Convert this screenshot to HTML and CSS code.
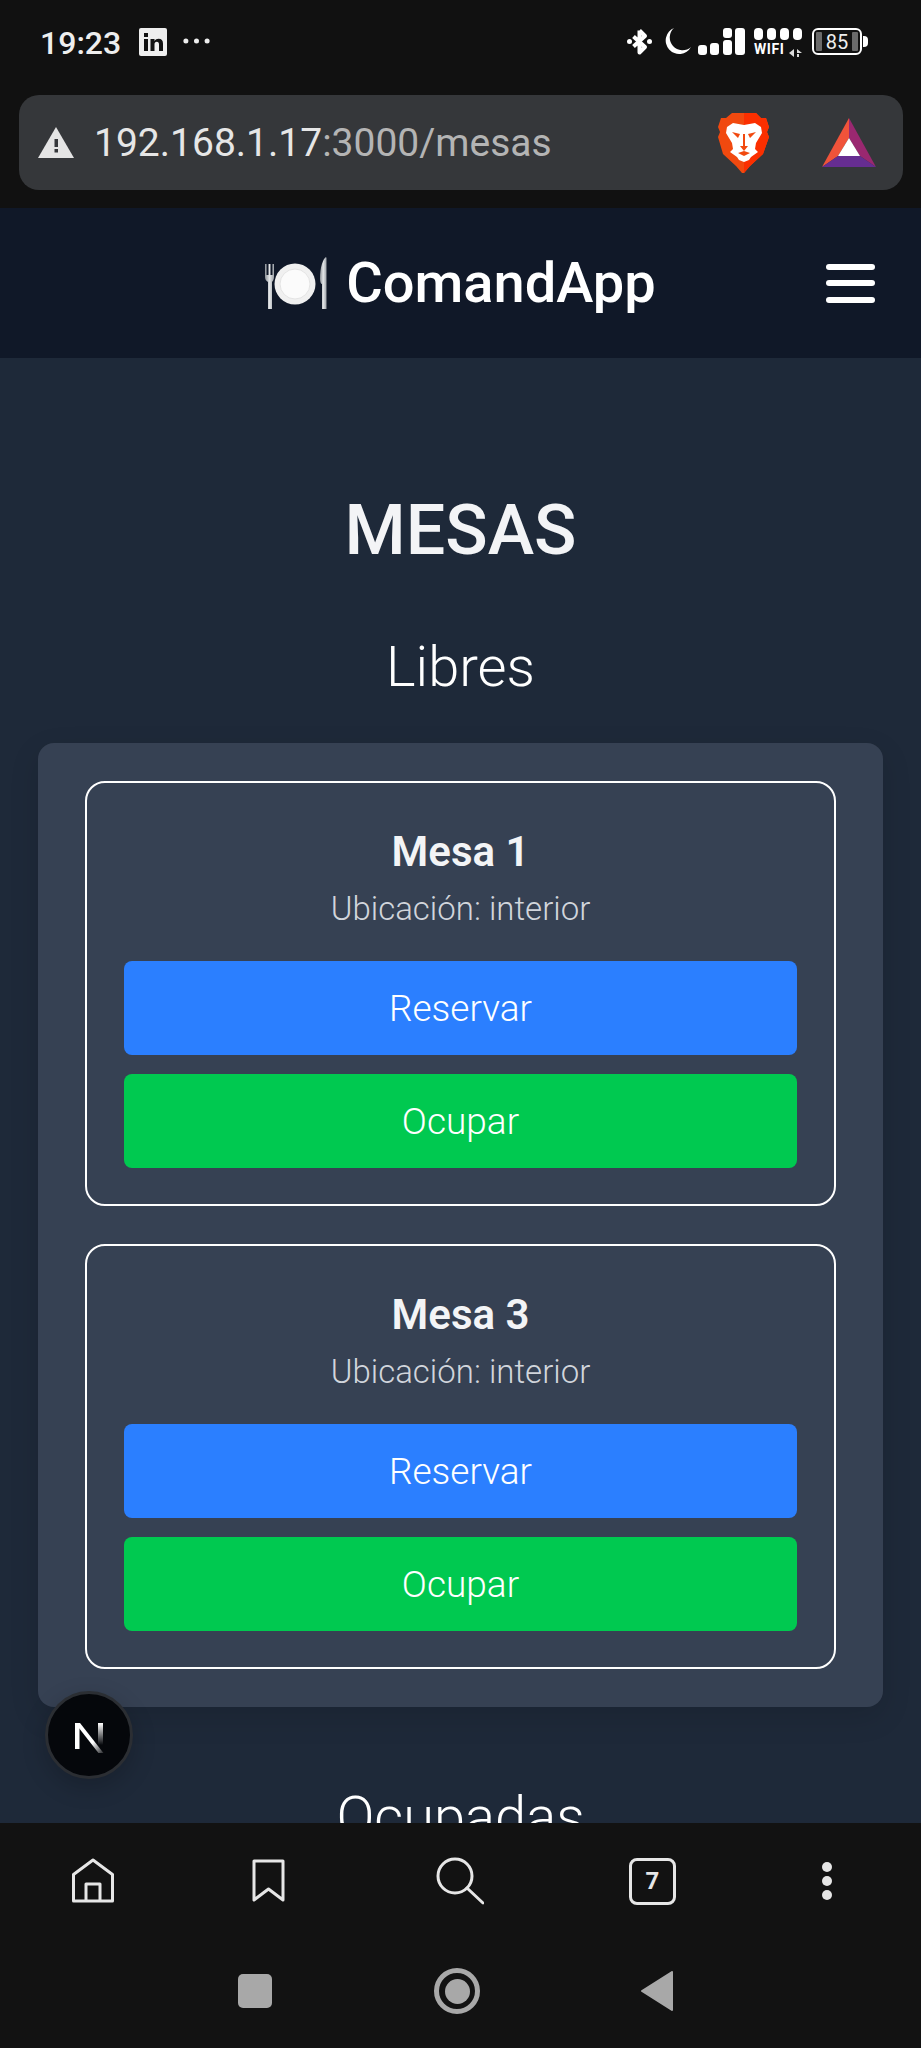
FILE: index.html

```html
<!DOCTYPE html>
<html lang="es">
<head>
    <meta charset="UTF-8">
    <meta name="viewport" content="width=device-width, initial-scale=1.0">
    <title>ComandApp - Mesas</title>
    <link rel="stylesheet" href="styles.css">
</head>
<body>
<div class="phone">
    <div class="chrome">
        <div class="status">
            <div class="status-left">
                <span class="time">19:23</span>
                <svg class="ic-linkedin" viewBox="0 0 28 28"><rect width="28" height="28" rx="2" fill="#eee"/><rect x="5" y="11" width="4" height="12" fill="#111"/><rect x="5" y="5" width="4" height="4" fill="#111"/><path d="M11.500 11h4v2c1-1.500 2.300-2.300 4-2.300 3 0 4.500 1.800 4.500 5V23h-4v-6.500c0-1.800-.7-2.800-2.200-2.800s-2.300 1-2.300 2.800V23h-4z" fill="#111"/></svg>
                <svg class="ic-more" viewBox="0 0 28 6"><circle cx="3" cy="3" r="2.600" fill="#eee"/><circle cx="14" cy="3" r="2.600" fill="#eee"/><circle cx="25" cy="3" r="2.600" fill="#eee"/></svg>
            </div>
            <div class="status-right">
                <svg class="ic-bt" viewBox="0 0 25 27"><path d="M12.500 2.500v22l5.500-5.500L6.500 8.500M12.500 2.500L18 8 6.500 18.500" fill="none" stroke="#fff" stroke-width="4" stroke-linejoin="round"/><circle cx="2.500" cy="13.500" r="2.500" fill="#fff"/><circle cx="22.500" cy="13.500" r="2.500" fill="#fff"/></svg>
                <svg class="ic-moon" viewBox="0 0 29 26"><path d="M12 0A13.500 13.500 0 1 0 29 19 11.500 11.500 0 0 1 12 0z" fill="#fff"/></svg>
                <svg class="ic-signal" viewBox="0 0 47 27" fill="#fff"><rect x="0" y="17" width="9" height="10" rx="3"/><rect x="12" y="15" width="9" height="12" rx="3"/><rect x="25" y="0" width="9" height="10" rx="3"/><rect x="25" y="12" width="9" height="15" rx="3"/><rect x="37" y="0" width="10" height="27" rx="3"/></svg>
                <div class="wifi">
                    <div class="wifi-dots"><i></i><i></i><i></i><i></i></div>
                    <div class="wifi-label">
                        <span>WIFI</span>
                        <svg class="ic-updown" viewBox="0 0 13 8" fill="#ddd"><path d="M5 0v8L0 4zM8 0l5 4H8zM8 5h2v3H8z"/></svg>
                    </div>
                </div>
                <div class="battery">
                    <div class="battery-body"><i></i><b>85</b><i></i></div>
                    <div class="battery-tip"></div>
                </div>
            </div>
        </div>
        <div class="urlbar">
            <svg class="ic-warn" viewBox="0 0 36 31"><path d="M18 0l18 31H0z" fill="#e4e4e4"/><rect x="16.500" y="12" width="3.500" height="8" fill="#35373a"/><rect x="16.500" y="22" width="3.500" height="3.500" fill="#35373a"/></svg>
            <div class="url"><span class="host">192.168.1.17</span>:3000/mesas</div>
            <svg class="ic-brave" viewBox="0 0 52 60">
                <path d="M14 0h24l5 5 5 0 3 9-2 5 2 5-6 17-13 12-6 7h-2l-6-7L5 41 0 24l2-5-2-5 3-9 5 0z" fill="#f1490f"/>
                <path d="M26 0h12l5 5 5 0 3 9-2 5 2 5-6 17-13 12-6 7z" fill="#fb2f00"/>
                <path d="M9 14l6-4 11 2 11-2 6 4 1 6-6 10-1 6 3 3-7 5-2 3-5 2-5-2-2-3-7-5 3-3-1-6-6-10z" fill="#fff"/>
                <path d="M14 19l8 2-2 4zM38 19l-8 2 2 4zM25 21h2v12h3l-4 5-4-5h3zM20 40l6-2 6 2-6 3z" fill="#f1490f"/>
            </svg>
            <svg class="ic-bat" viewBox="0 0 54 49">
                <path d="M27 0L0 49l16-11 11-18z" fill="#f0533a"/>
                <path d="M27 0l27 49-16-11-11-18z" fill="#9a2870"/>
                <path d="M0 49h54L38 38H16z" fill="#662d91"/>
                <path d="M27 20l11 18H16z" fill="#fff"/>
            </svg>
        </div>
    </div>

    <div class="screen">
        <header class="topnav">
            <div></div>
            <div class="brand">
                <svg class="ic-plate" viewBox="0 0 62 52">
                    <defs>
                        <linearGradient id="metal" x1="0" y1="0" x2="1" y2="0"><stop offset="0" stop-color="#8d9298"/><stop offset="0.5" stop-color="#e4e6e8"/><stop offset="1" stop-color="#9da2a8"/></linearGradient>
                    </defs>
                    <path d="M0 7v13c0 2 1 4 3 5v27h4V25c1-1 2-3 2-5V7H7.500v11H5.500V7h-2v11h-2V7z" fill="url(#metal)"/>
                    <circle cx="30" cy="27" r="20.500" fill="#f0f0f0"/>
                    <circle cx="30" cy="27" r="15" fill="#fbfbfb" stroke="#e4e4e4"/>
                    <path d="M61 0c-3 2-6 10-6 22 0 3 1 5 2 5v25h4.500V1z" fill="url(#metal)"/>
                </svg>
                <span>ComandApp</span>
            </div>
            <button class="burger" aria-label="Menu"><i></i><i></i><i></i></button>
        </header>

        <main class="content">
            <h1>MESAS</h1>
            <h2>Libres</h2>
            <section class="panel">
                <article class="card">
                    <h3>Mesa 1</h3>
                    <p>Ubicación: interior</p>
                    <button class="btn btn-blue">Reservar</button>
                    <button class="btn btn-green">Ocupar</button>
                </article>
                <article class="card">
                    <h3>Mesa 3</h3>
                    <p>Ubicación: interior</p>
                    <button class="btn btn-blue">Reservar</button>
                    <button class="btn btn-green">Ocupar</button>
                </article>
            </section>
            <h2 class="next-title">Ocupadas</h2>
        </main>

        <div class="next-badge">
            <svg viewBox="0 0 36 36" width="36" height="36">
                <defs>
                    <linearGradient id="ng" x1="0" y1="0" x2="1" y2="1"><stop offset="0.6" stop-color="#fff"/><stop offset="1" stop-color="#fff" stop-opacity="0"/></linearGradient>
                    <linearGradient id="ng2" x1="0" y1="0" x2="0" y2="1"><stop offset="0" stop-color="#fff"/><stop offset="1" stop-color="#fff" stop-opacity="0"/></linearGradient>
                </defs>
                <rect x="4" y="6" width="4.500" height="26" fill="#fff"/>
                <path d="M4 6h5l25 32h-5z" fill="url(#ng)"/>
                <rect x="27" y="6" width="5" height="22" fill="url(#ng2)"/>
            </svg>
        </div>
    </div>

    <footer class="bottom">
        <nav class="toolbar">
            <svg class="ic-tool" viewBox="0 0 48 48" fill="none" stroke="#e6e6e6" stroke-width="3" stroke-linejoin="round"><path d="M4.500 44V17.500L24 3l19.500 14.500V44z"/><path d="M17 44V27h14v17"/></svg>
            <svg class="ic-tool" viewBox="0 0 48 48" fill="none" stroke="#e6e6e6" stroke-width="3" stroke-linejoin="round"><path d="M10 4h29v39L24.500 32 10 43z"/></svg>
            <svg class="ic-tool" viewBox="0 0 48 48" fill="none" stroke="#e6e6e6" stroke-width="3" stroke-linecap="round"><circle cx="19" cy="19" r="17"/><path d="M31 31l16 15"/></svg>
            <div class="tabs">7</div>
            <div class="menu-dots"><i></i><i></i><i></i></div>
        </nav>
        <nav class="sysnav">
            <div class="sys-square"></div>
            <div class="sys-circle"><i></i></div>
            <svg class="sys-back" viewBox="0 0 32 40"><path d="M31 1v38L1 20z" fill="#a8a8a8" stroke="#a8a8a8" stroke-width="2" stroke-linejoin="round"/></svg>
        </nav>
    </footer>
</div>
</body>
</html>
```

FILE: styles.css

```css
* { box-sizing: border-box; }
body { margin: 0; background: #111; font-family: Roboto, "Liberation Sans", sans-serif; }
.phone { width: 921px; height: 2048px; display: flex; flex-direction: column; overflow: hidden; }

/* browser chrome */
.chrome { background: #111; height: 208px; padding: 28px 18px 0 19px; }
.status { display: flex; justify-content: space-between; height: 67px; }
.status-left { display: flex; align-items: flex-start; padding-left: 21px; }
.time { font-size: 32px; font-weight: 500; line-height: 30px; color: #eee; }
.ic-linkedin { width: 28px; height: 28px; margin-left: 18px; }
.ic-more { width: 27px; height: 6px; margin: 10px 0 0 16px; }
.status-right { display: flex; align-items: flex-start; padding-right: 35px; }
.ic-bt { width: 25px; height: 27px; }
.ic-moon { width: 29px; height: 26px; margin-left: 10px; }
.ic-signal { width: 47px; height: 27px; margin-left: 7px; }
.wifi { width: 48px; margin-left: 9px; color: #fff; }
.wifi-dots { display: flex; justify-content: space-between; }
.wifi-dots i { width: 9px; height: 12px; border-radius: 4px; background: #fff; }
.wifi-label { display: flex; justify-content: space-between; align-items: flex-end; height: 16px; }
.wifi-label span { font-size: 14px; font-weight: 700; line-height: 14px; letter-spacing: 0.6px; }
.ic-updown { width: 13px; height: 8px; margin-bottom: -1px; }
.battery { display: flex; align-items: center; margin-left: 10px; height: 27px; }
.battery-body { width: 50px; height: 27px; border: 2px solid #fff; border-radius: 6px; display: flex; align-items: center; justify-content: space-between; padding: 0 2px; }
.battery-body i { width: 6px; height: 19px; background: #6a6a6a; border-radius: 1px; }
.battery-body b { font-size: 20px; font-weight: 400; color: #eee; }
.battery-tip { width: 5px; height: 11px; margin-left: 1px; background: #fff; border-radius: 0 4px 4px 0; }

.urlbar { height: 95px; background: #35373a; border-radius: 20px; display: flex; align-items: center; padding: 0 27px 0 19px; }
.ic-warn { width: 36px; height: 31px; }
.url { flex: 1; margin-left: 20px; font-size: 39px; color: #b4b4b4; }
.url .host { color: #e6e6e6; }
.ic-brave { width: 52px; height: 60px; }
.ic-bat { width: 54px; height: 49px; margin-left: 52px; }

/* page */
.screen { position: relative; height: 1615px; background: #1e2939; overflow: hidden; }
.topnav { height: 150px; background: #101828; display: grid; grid-template-columns: 1fr auto 1fr; align-items: center; padding: 0 46px; }
.brand { display: flex; align-items: center; gap: 19px; font-size: 56px; font-weight: 500; color: #fff; }
.ic-plate { width: 62px; height: 52px; }
.burger { justify-self: end; width: 49px; height: 39px; padding: 0; border: 0; background: none; display: flex; flex-direction: column; justify-content: space-between; }
.burger i { display: block; height: 6px; border-radius: 3px; background: #fff; }

.content { padding: 0 38px; text-align: center; color: #fff; }
h1 { margin: 0; padding-top: 130px; font-size: 70px; font-weight: 500; line-height: 84px; color: #f3f4f6; }
h2 { margin: 0; padding-top: 61px; font-size: 56px; font-weight: 300; line-height: 68px; }
.panel { margin-top: 42px; padding: 38px 47px; background: #364153; border-radius: 16px; display: flex; flex-direction: column; gap: 38px; box-shadow: 0 10px 30px rgba(0, 0, 0, .12); }
.card { border: 2px solid #fff; border-radius: 20px; padding: 41px 37px 36px; display: flex; flex-direction: column; }
h3 { margin: 0; font-size: 42px; font-weight: 600; line-height: 56px; color: #f3f4f6; }
.card p { margin: 5px 0 0; font-size: 33px; font-weight: 300; line-height: 48px; color: #d1d5dc; }
.btn { height: 94px; margin-top: 19px; border: 0; border-radius: 8px; font-family: inherit; font-size: 37px; font-weight: 300; color: #fff; }
.card p + .btn { margin-top: 28px; }
.btn-blue { background: #2b7fff; }
.btn-green { background: #00c950; }
.next-title { padding-top: 76px; }

.next-badge { position: absolute; left: 45px; top: 1483px; width: 88px; height: 88px; border-radius: 50%; background: #05070b; border: 3px solid #2b2e33; display: flex; align-items: center; justify-content: center; box-shadow: 0 8px 24px rgba(0, 0, 0, .2); }

/* bottom bars */
.bottom { flex: 1; background: #121212; }
.toolbar { display: grid; grid-template-columns: 175px 192px 193px 174px 48px; align-items: center; padding: 34px 0 0 69px; }
.ic-tool { width: 48px; height: 48px; }
.tabs { width: 47px; height: 47px; border: 3px solid #e6e6e6; border-radius: 8px; display: flex; align-items: center; justify-content: center; font-size: 24px; font-weight: 700; color: #e6e6e6; }
.menu-dots { display: flex; flex-direction: column; align-items: center; gap: 4px; }
.menu-dots i { width: 10px; height: 10px; border-radius: 50%; background: #e6e6e6; }
.sysnav { display: grid; grid-template-columns: 196px 207px 32px; align-items: center; padding: 63px 0 0 238px; }
.sys-square { width: 34px; height: 34px; border-radius: 5px; background: #a8a8a8; }
.sys-circle { width: 46px; height: 46px; border-radius: 50%; border: 5px solid #a8a8a8; display: flex; align-items: center; justify-content: center; }
.sys-circle i { width: 25px; height: 25px; border-radius: 50%; background: #a8a8a8; }
.sys-back { width: 32px; height: 40px; }
```
